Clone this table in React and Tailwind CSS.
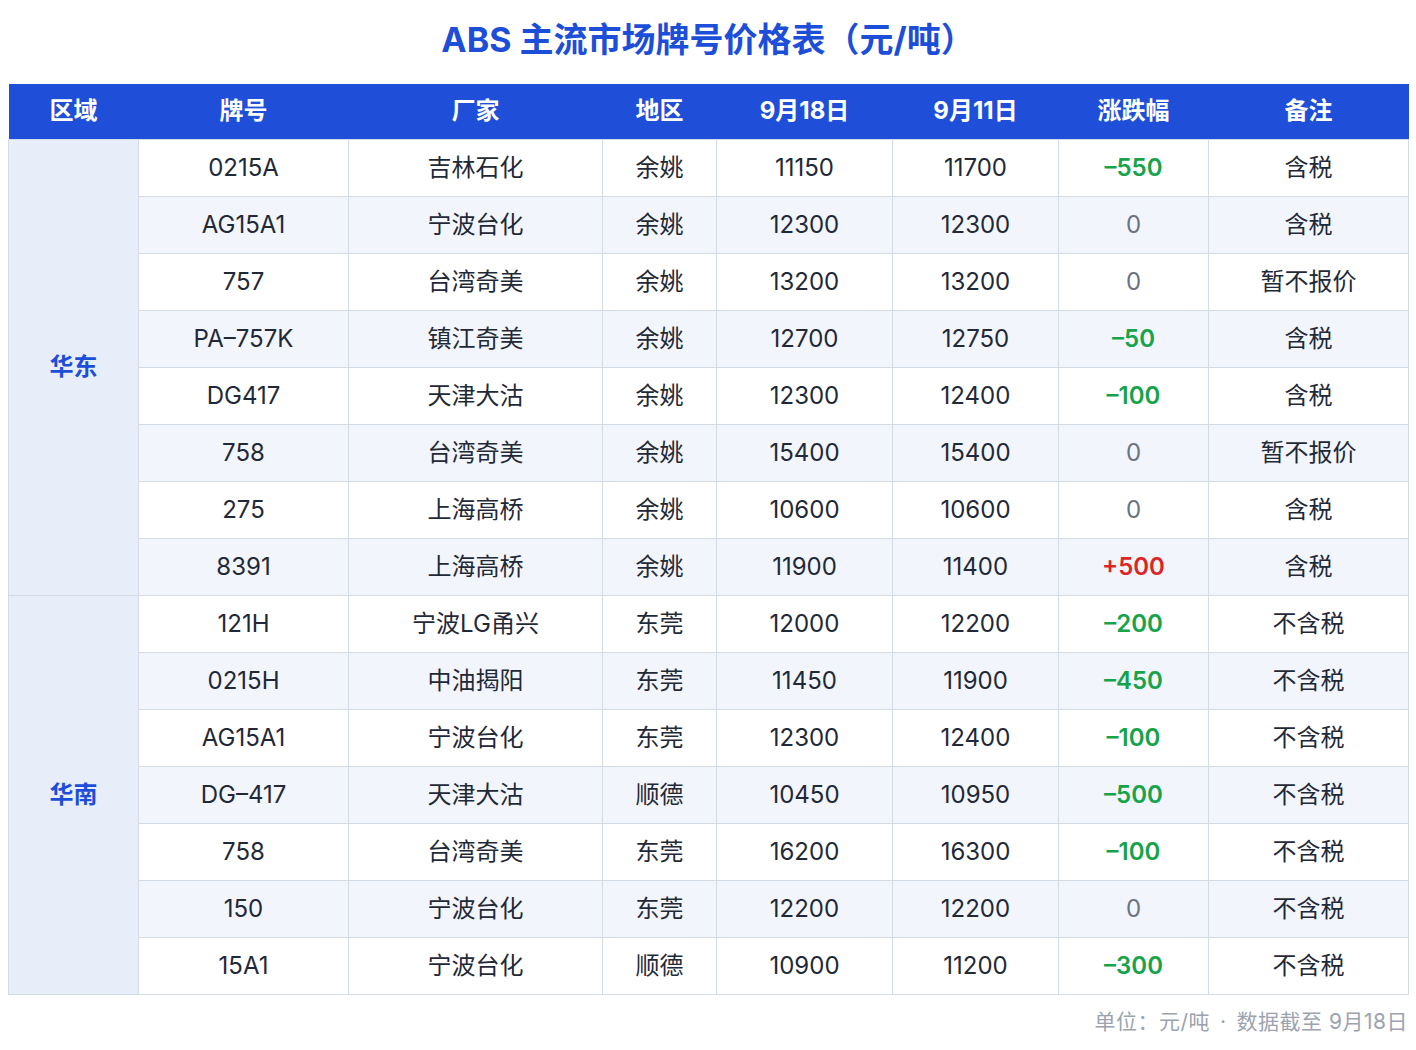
const rows = [
  { brand: '0215A', maker: '吉林石化', area: '余姚', a: '11150', b: '11700', diff: '–550', note: '含税' },
  { brand: 'AG15A1', maker: '宁波台化', area: '余姚', a: '12300', b: '12300', diff: '0', note: '含税' },
  { brand: '757', maker: '台湾奇美', area: '余姚', a: '13200', b: '13200', diff: '0', note: '暂不报价' },
  { brand: 'PA–757K', maker: '镇江奇美', area: '余姚', a: '12700', b: '12750', diff: '–50', note: '含税' },
  { brand: 'DG417', maker: '天津大沽', area: '余姚', a: '12300', b: '12400', diff: '–100', note: '含税' },
  { brand: '758', maker: '台湾奇美', area: '余姚', a: '15400', b: '15400', diff: '0', note: '暂不报价' },
  { brand: '275', maker: '上海高桥', area: '余姚', a: '10600', b: '10600', diff: '0', note: '含税' },
  { brand: '8391', maker: '上海高桥', area: '余姚', a: '11900', b: '11400', diff: '+500', note: '含税' },
  { brand: '121H', maker: '宁波LG甬兴', area: '东莞', a: '12000', b: '12200', diff: '–200', note: '不含税' },
  { brand: '0215H', maker: '中油揭阳', area: '东莞', a: '11450', b: '11900', diff: '–450', note: '不含税' },
  { brand: 'AG15A1', maker: '宁波台化', area: '东莞', a: '12300', b: '12400', diff: '–100', note: '不含税' },
  { brand: 'DG–417', maker: '天津大沽', area: '顺德', a: '10450', b: '10950', diff: '–500', note: '不含税' },
  { brand: '758', maker: '台湾奇美', area: '东莞', a: '16200', b: '16300', diff: '–100', note: '不含税' },
  { brand: '150', maker: '宁波台化', area: '东莞', a: '12200', b: '12200', diff: '0', note: '不含税' },
  { brand: '15A1', maker: '宁波台化', area: '顺德', a: '10900', b: '11200', diff: '–300', note: '不含税' },
];

const headers = ['区域', '牌号', '厂家', '地区', '9月18日', '9月11日', '涨跌幅', '备注'];
const widths = ['w-[130px]', 'w-[210px]', 'w-[254px]', 'w-[114px]', 'w-[176px]', 'w-[166px]', 'w-[150px]', 'w-[200px]'];

function diffClass(d) {
  if (d.startsWith('+')) return 'text-[#dc2626] font-semibold';
  if (d === '0') return 'text-[#6b7280]';
  return 'text-[#16a34a] font-semibold';
}

export default function App() {
  const cell = 'border border-[#d3dbe7] text-center h-[57px] p-0';
  return (
    <div className="bg-white min-h-[1050px] px-2 font-['Inter','Noto_Sans_CJK_SC',sans-serif] text-[#1f2937]">
      <h1 className="pt-[18px] h-[84px] text-center text-[34px] leading-[44px] font-bold text-[#1d4ed8]">
        ABS 主流市场牌号价格表（元/吨）
      </h1>
      <table className="w-[1400px] table-fixed border-collapse text-[24px]">
        <colgroup>
          {widths.map((w, i) => <col key={i} className={w} />)}
        </colgroup>
        <thead>
          <tr className="bg-[#1f4fd8] text-white h-[55px]">
            {headers.map((h) => (
              <th key={h} className="font-bold text-[24px] text-center p-0">{h}</th>
            ))}
          </tr>
        </thead>
        <tbody>
          {rows.map((r, i) => (
            <tr key={i} className={i % 2 === 0 ? 'bg-white' : 'bg-[#f2f5fb]'}>
              {i === 0 && (
                <td rowSpan={8} className={`${cell} bg-[#e8eef9] text-[#1d4ed8] font-bold`}>华东</td>
              )}
              {i === 8 && (
                <td rowSpan={7} className={`${cell} bg-[#e8eef9] text-[#1d4ed8] font-bold`}>华南</td>
              )}
              <td className={cell}>{r.brand}</td>
              <td className={cell}>{r.maker}</td>
              <td className={cell}>{r.area}</td>
              <td className={cell}>{r.a}</td>
              <td className={cell}>{r.b}</td>
              <td className={`${cell} ${diffClass(r.diff)}`}>{r.diff}</td>
              <td className={cell}>{r.note}</td>
            </tr>
          ))}
        </tbody>
      </table>
      <div className="mt-[13px] text-right text-[21px] leading-[28px] text-[#9ca3af] tracking-[0.5px]">
        单位：元/吨<span className="mx-[10px]">·</span>数据截至 9月18日
      </div>
    </div>
  );
}
